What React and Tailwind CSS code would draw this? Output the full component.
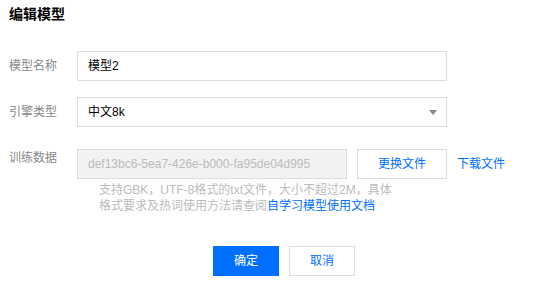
import React from "react";

const font = { fontFamily: '"Liberation Sans", "Noto Sans CJK SC", sans-serif' };

const Label = ({ children, className = "" }) => (
	<div className={`w-[68px] shrink-0 text-[12px] text-[#888] ${className}`}>{children}</div>
);

export default function App() {
	return (
		<div
			className="w-[543px] h-[283px] bg-white pl-[9px] text-[12px] text-[#000] overflow-hidden"
			style={font}>
			{/* Title */}
			<div className="pt-[4px] text-[14px] leading-[20px] font-bold text-[#000]">编辑模型</div>

			{/* 模型名称 */}
			<div className="flex items-center mt-[27px]">
				<Label className="leading-[30px]">模型名称</Label>
				<div className="w-[370px] h-[30px] border border-[#ddd] flex items-center px-[10px] text-[12px] text-[#000]">
					模型2
				</div>
			</div>

			{/* 引擎类型 */}
			<div className="flex items-center mt-[16px]">
				<Label className="leading-[30px]">引擎类型</Label>
				<div className="w-[370px] h-[30px] border border-[#ddd] flex items-center justify-between pl-[10px] pr-[9px] text-[12px] text-[#000]">
					<span>中文8k</span>
					<span className="w-0 h-0 border-l-[4px] border-r-[4px] border-t-[5px] border-l-transparent border-r-transparent border-t-[#888]" />
				</div>
			</div>

			{/* 训练数据 */}
			<div className="flex items-start mt-[22px]">
				<Label className="leading-[18px]">训练数据</Label>
				<div className="w-[270px] h-[30px] border border-[#ddd] bg-[#f2f2f2] flex items-center px-[10px] text-[12px] text-[#bbb]">
					def13bc6-5ea7-426e-b000-fa95de04d995
				</div>
				<button className="ml-[10px] w-[90px] h-[30px] border border-[#ddd] bg-white text-[12px] text-[#006eff]">
					更换文件
				</button>
				<a className="ml-[10px] leading-[30px] text-[12px] text-[#006eff]">下载文件</a>
			</div>

			{/* help */}
			<div className="ml-[90px] mt-[3px] text-[12px] leading-[16px] text-[#bbb]">
				<div>支持GBK，UTF-8格式的txt文件，大小不超过2M，具体</div>
				<div>
					格式要求及热词使用方法请查阅<a className="text-[#006eff]">自学习模型使用文档</a>
				</div>
			</div>

			{/* actions */}
			<div className="flex gap-[10px] ml-[204px] mt-[32px]">
				<button className="w-[66px] h-[30px] bg-[#006eff] text-white text-[12px]">确定</button>
				<button className="w-[66px] h-[30px] border border-[#ddd] bg-white text-[#006eff] text-[12px]">
					取消
				</button>
			</div>
		</div>
	);
}
